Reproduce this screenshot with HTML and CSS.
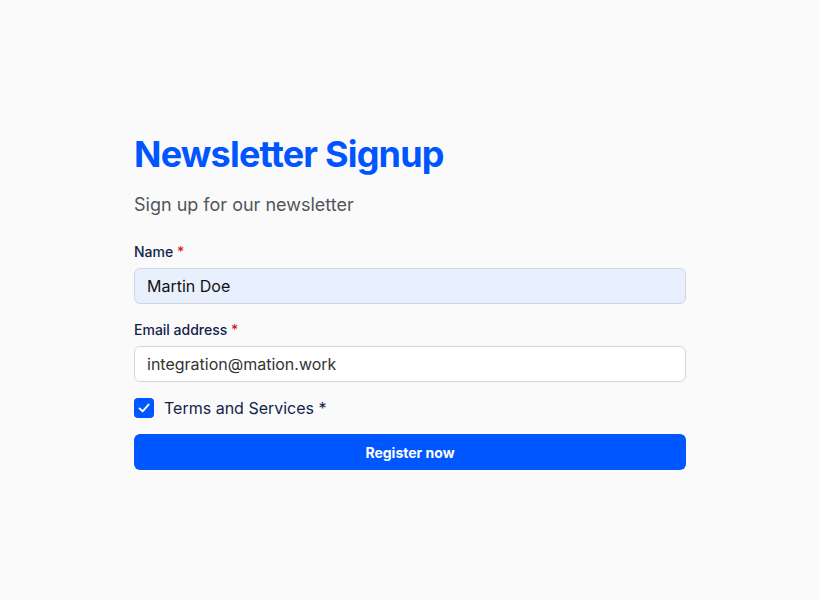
FILE: index.html
```html
<!DOCTYPE html>
<html>
<head>
<meta charset="utf-8">
<link rel="stylesheet" href="styles.css">
</head>
<body>
<main class="page">
  <form class="form">
    <h1 class="title">Newsletter Signup</h1>
    <p class="subtitle">Sign up for our newsletter</p>
    <div class="field">
      <label class="label">Name <span class="req">*</span></label>
      <div class="input autofill">Martin Doe</div>
    </div>
    <div class="field">
      <label class="label">Email address <span class="req">*</span></label>
      <div class="input">integration@mation.work</div>
    </div>
    <div class="check-row">
      <span class="checkbox">
        <svg width="14" height="14" viewBox="0 0 14 14"><path d="M2.5 7.4 L5.6 10.3 L11.6 3.6" fill="none" stroke="#fff" stroke-width="1.9" stroke-linecap="round" stroke-linejoin="round"/></svg>
      </span>
      <span class="check-label">Terms and Services *</span>
    </div>
    <button type="button" class="button">Register now</button>
  </form>
</main>
</body>
</html>
```
FILE: styles.css
```css
html, body {
  margin: 0;
  padding: 0;
  background: #fafafa;
  font-family: Inter, "Noto Sans", sans-serif;
}
.page {
  padding: 130px 134px 0 134px;
}
.form {
  width: 552px;
  display: flex;
  flex-direction: column;
}
.title {
  margin: 0;
  font-size: 36px;
  font-weight: 700;
  line-height: 48px;
  color: #0055ff;
  letter-spacing: -0.8px;
}
.subtitle {
  margin: 15px 0 0 0;
  font-size: 18px;
  line-height: 24px;
  color: #52555c;
}
.field {
  display: flex;
  flex-direction: column;
  margin-top: 25px;
}
.field + .field {
  margin-top: 16px;
}
.label {
  font-size: 14px;
  font-weight: 500;
  line-height: 20px;
  color: #14234b;
  margin-bottom: 6px;
}
.req {
  color: #d31c2b;
}
.input {
  height: 34px;
  box-sizing: content-box;
  border: 1px solid #cfd6e2;
  border-radius: 6px;
  background: #fff;
  padding: 0 12px;
  font-size: 16px;
  line-height: 34px;
  color: #333;
}
.input.autofill {
  background: #e8f0fe;
  color: #111;
}
.check-row {
  display: flex;
  align-items: center;
  gap: 10px;
  margin-top: 14px;
}
.checkbox {
  width: 20px;
  height: 20px;
  border-radius: 4px;
  background: #0057ff;
  display: flex;
  align-items: center;
  justify-content: center;
}
.check-label {
  font-size: 16px;
  line-height: 24px;
  color: #14234b;
}
.button {
  margin-top: 14px;
  height: 36px;
  border: none;
  border-radius: 6px;
  background: #0057ff;
  color: #fff;
  font-family: Inter, "Noto Sans", sans-serif;
  font-size: 14px;
  font-weight: 700;
  cursor: pointer;
}
```
